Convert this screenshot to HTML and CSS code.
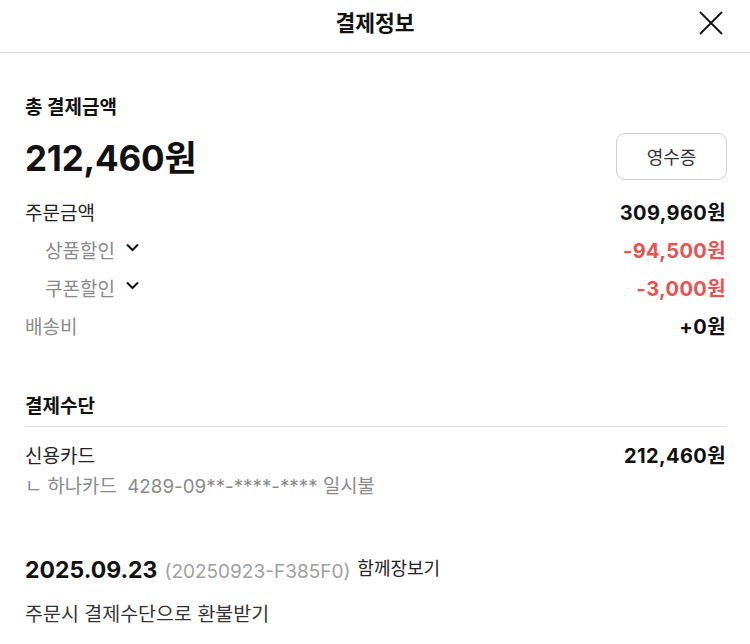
FILE: index.html
```html
<!DOCTYPE html>
<html lang="ko">
<head>
<meta charset="utf-8">
<link rel="stylesheet" href="styles.css">
</head>
<body>
<header class="topbar">
  <h1 class="title">결제정보</h1>
  <button class="close" aria-label="닫기">
    <svg width="24" height="24" viewBox="0 0 24 24"><path d="M1 1 L23 23 M23 1 L1 23" stroke="#111" stroke-width="1.8" fill="none"/></svg>
  </button>
</header>
<main class="content">
  <section class="total">
    <h2 class="section-title">총 결제금액</h2>
    <div class="total-row">
      <div class="total-amount">212,460원</div>
      <button class="receipt">영수증</button>
    </div>
    <ul class="lines">
      <li class="line"><span class="label dark">주문금액</span><span class="value">309,960원</span></li>
      <li class="line sub"><span class="label">상품할인<svg class="chev" width="15" height="10" viewBox="0 0 15 10"><path d="M2 2.5 L7.5 8 L13 2.5" stroke="#111" stroke-width="2" fill="none"/></svg></span><span class="value red">-94,500원</span></li>
      <li class="line sub"><span class="label">쿠폰할인<svg class="chev" width="15" height="10" viewBox="0 0 15 10"><path d="M2 2.5 L7.5 8 L13 2.5" stroke="#111" stroke-width="2" fill="none"/></svg></span><span class="value red">-3,000원</span></li>
      <li class="line"><span class="label">배송비</span><span class="value">+0원</span></li>
    </ul>
  </section>
  <section class="method">
    <h2 class="section-title ruled">결제수단</h2>
    <div class="line card"><span class="label dark">신용카드</span><span class="value">212,460원</span></div>
    <div class="card-info">ㄴ 하나카드&nbsp; 4289-09**-****-**** 일시불</div>
  </section>
  <section class="order">
    <div class="order-head"><span class="date">2025.09.23</span> <span class="order-no">(20250923-F385F0)</span> <span class="shop">함께장보기</span></div>
    <div class="refund">주문시 결제수단으로 환불받기</div>
  </section>
</main>
</body>
</html>
```
FILE: styles.css
```css
* { box-sizing: border-box; }
html, body { margin: 0; padding: 0; background: #fff; }
body {
  font-family: Inter, "Noto Sans CJK KR", sans-serif;
  color: #222;
  width: 750px;
  height: 644px;
  overflow: hidden;
}
.topbar {
  position: relative;
  height: 53px;
  border-bottom: 1px solid #dcdcdc;
  display: flex;
  align-items: center;
  justify-content: center;
}
.title {
  margin: 0;
  font-size: 21.5px;
  font-weight: 700;
  color: #111;
  line-height: 46px;
  margin-top: -6px;
}
.close {
  position: absolute;
  right: 27px;
  top: 11px;
  border: 0;
  background: none;
  padding: 0;
  width: 24px;
  height: 24px;
}
.close svg { display: block; }
.content { padding: 0 24px 0 25px; }
.section-title {
  margin: 0;
  font-size: 19px;
  font-weight: 700;
  line-height: 24px;
  color: #111;
}
.total .section-title { margin-top: 43px; }
.total-row {
  margin-top: 13px;
  height: 46px;
  display: flex;
  align-items: center;
  justify-content: space-between;
}
.total-amount {
  font-size: 35px;
  font-weight: 700;
  color: #111;
  line-height: 44px;
  margin-top: 4px;
  letter-spacing: -0.2px;
}
.receipt {
  width: 111px;
  height: 47px;
  border: 1px solid #cfcfcf;
  border-radius: 9px;
  background: #fff;
  font-family: Inter, "Noto Sans CJK KR", sans-serif;
  font-size: 18px;
  color: #333;
  padding: 0;
  margin-right: -1px;
}
.lines { list-style: none; margin: 13px 0 0; padding: 0; }
.line {
  display: flex;
  justify-content: space-between;
  align-items: center;
  height: 38px;
  font-size: 19px;
}
.label { color: #8a8a8a; display: inline-flex; align-items: center; }
.label.dark { color: #222; }
.sub .label { padding-left: 20px; }
.chev { margin-left: 10px; margin-top: -5px; }
.value { font-weight: 700; color: #111; font-size: 20px; letter-spacing: 0.4px; }
.value.red { color: #e8524f; }
.method { margin-top: 51px; }
.ruled {
  padding-bottom: 7px;
  border-bottom: 1px solid #e2e2e2;
}
.card { margin-top: 12px; height: 30px; }
.card-info {
  margin-top: 3px;
  line-height: 30px;
  font-size: 18.8px;
  color: #8a8a8a;
}
.order { margin-top: 52px; }
.order-head {
  line-height: 32px;
  display: flex;
  align-items: baseline;
  gap: 7px;
}
.date { font-size: 23px; font-weight: 700; color: #111; }
.order-no { font-size: 19px; color: #a0a0a0; }
.shop { font-size: 18px; color: #222; position: relative; top: -3px; }
.refund {
  margin-top: 11px;
  line-height: 30px;
  font-size: 19.5px;
  color: #333;
}
```
